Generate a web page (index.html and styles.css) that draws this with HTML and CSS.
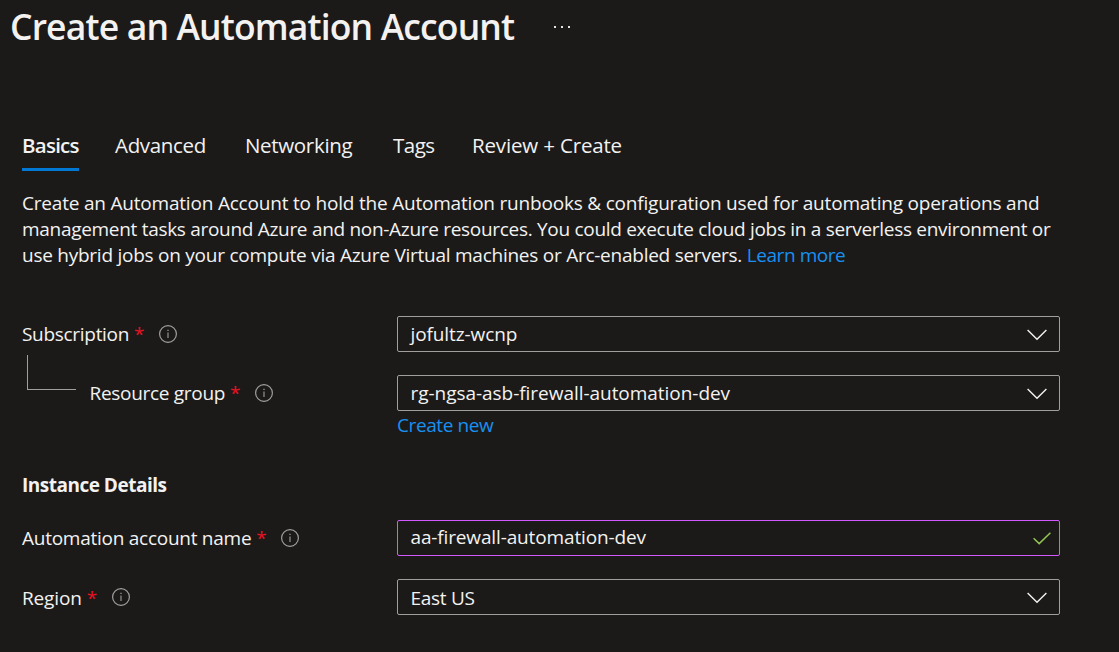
FILE: index.html
```html
<!DOCTYPE html>
<html lang="en">
<head>
<meta charset="utf-8">
<title>Create an Automation Account</title>
<link rel="stylesheet" href="styles.css">
</head>
<body>
<svg class="defs" aria-hidden="true">
  <symbol id="info" viewBox="0 0 20 20"><circle cx="10" cy="10" r="8.4" fill="none" stroke="#a19f9d" stroke-width="1.2"/><path d="M10 8.4V14" stroke="#85837f" stroke-width="1.4"/><path d="M10 5.7V7.1" stroke="#85837f" stroke-width="1.6"/></symbol>
  <symbol id="chevron" viewBox="0 0 20 12"><path d="M.6 1L10 10.3 19.4 1" fill="none" stroke="#f3f2f1" stroke-width="1.4"/></symbol>
  <symbol id="check" viewBox="0 0 18 13"><path d="M.6 6.2L6.2 11.6 17.4 .7" fill="none" stroke="#92c353" stroke-width="1.5"/></symbol>
</svg>
<header class="header">
  <h1 class="title">Create an Automation Account</h1>
  <svg class="more" viewBox="0 0 18 2"><path d="M0 0h2v2H0zM7 0h2v2H7zM14 0h2v2h-2z" fill="#e6e4e2"/></svg>
</header>
<nav class="tabs">
  <a class="tab active">Basics</a>
  <a class="tab advanced">Advanced</a>
  <a class="tab networking">Networking</a>
  <a class="tab tags">Tags</a>
  <a class="tab review">Review + Create</a>
</nav>
<p class="description">
  <span class="line l1">Create an Automation Account to hold the Automation runbooks &amp; configuration used for automating operations and</span>
  <span class="line l2">management tasks around Azure and non-Azure resources. You could execute cloud jobs in a serverless environment or</span>
  <span class="line l3">use hybrid jobs on your compute via Azure Virtual machines or Arc-enabled servers. <a class="link learn">Learn more</a></span>
</p>
<main class="form">
  <div class="row">
    <div class="label"><span>Subscription</span><span class="req">*</span><svg class="info"><use href="#info"/></svg></div>
    <div class="field"><span class="v-sub">jofultz-wcnp</span><svg class="chevron"><use href="#chevron"/></svg></div>
  </div>
  <div class="row">
    <div class="label"><i class="elbow"></i><span>Resource group</span><span class="req">*</span><svg class="info"><use href="#info"/></svg></div>
    <div class="field"><span class="v-rg">rg-ngsa-asb-firewall-automation-dev</span><svg class="chevron"><use href="#chevron"/></svg></div>
  </div>
  <a class="link create">Create new</a>
  <h2 class="section">Instance Details</h2>
  <div class="row">
    <div class="label"><span class="t-name">Automation account name</span><span class="req">*</span><svg class="info"><use href="#info"/></svg></div>
    <div class="field valid"><span class="v-name">aa-firewall-automation-dev</span><svg class="check"><use href="#check"/></svg></div>
  </div>
  <div class="row">
    <div class="label region"><span class="t-region">Region</span><span class="req">*</span><svg class="info"><use href="#info"/></svg></div>
    <div class="field"><span class="v-region">East US</span><svg class="chevron"><use href="#chevron"/></svg></div>
  </div>
</main>
</body>
</html>
```
FILE: styles.css
```css
* { box-sizing: border-box; }
body {
  margin: 0;
  height: 652px;
  overflow: hidden;
  background: #1b1a19;
  color: #f3f2f1;
  font: 19px/26px "Open Sans", "Noto Sans", sans-serif;
  white-space: nowrap;
}
.defs { display: none; }
.header { display: flex; padding: 2px 0 0 10px; height: 131px; }
.title { margin: 0; width: 544px; font-size: 35.5px; line-height: 48px; font-weight: 600; letter-spacing: -.85px; }
.more { width: 18px; height: 2px; margin-top: 24px; }
.tabs { display: flex; height: 40px; padding-left: 22px; font-size: 20.5px; line-height: 28px; letter-spacing: -.32px; }
.active { width: 57px; margin-right: 36px; font-weight: 600; letter-spacing: -.75px; border-bottom: 3px solid #0078d4; }
.advanced { width: 130px; }
.networking { width: 148px; }
.tags { width: 79px; letter-spacing: -.5px; }
.review { letter-spacing: -.16px; }
.description { margin: 19px 0 0 22px; }
.line { display: block; letter-spacing: -.3px; }
.l1 { letter-spacing: -.2px; }
.l3 { letter-spacing: -.25px; }
.learn { letter-spacing: -.44px; }
.link { color: #1890f1; }
.form { display: flex; flex-direction: column; padding: 48px 0 0 22px; }
.row { display: flex; height: 36px; margin-bottom: 23px; }
.label { display: flex; align-items: center; width: 375px; letter-spacing: -.3px; }
.req { color: #e81123; margin-left: 5px; width: 10px; letter-spacing: 0; }
.info { width: 20px; height: 20px; margin-left: 14px; }
.elbow { width: 49px; height: 35px; margin: -41px 13.5px 0 5px; border-left: 1px solid #a19f9d; border-bottom: 1px solid #a19f9d; }
.t-name { letter-spacing: -.26px; }
.t-region { letter-spacing: -.15px; }
.region span { padding-top: 1px; }
.field { display: flex; align-items: center; justify-content: space-between; width: 663px; padding: 0 12px 0 12.5px; border: 1px solid #a19f9d; border-radius: 2px; }
.v-sub { letter-spacing: -.1px; }
.v-rg { letter-spacing: -.04px; }
.v-name { letter-spacing: -.14px; padding-bottom: 2px; }
.v-region { letter-spacing: -.3px; padding-top: 1px; }
.valid { border-color: #d159ff; padding-right: 8px; }
.chevron { width: 20px; height: 12px; margin-top: 1px; }
.check { width: 18px; height: 13px; }
.create { line-height: 26px; margin: -22px 0 0 375px; letter-spacing: -.4px; }
.section { margin: 34px 0 22px; font-size: 19px; line-height: 26px; font-weight: 700; letter-spacing: -.5px; }
```
